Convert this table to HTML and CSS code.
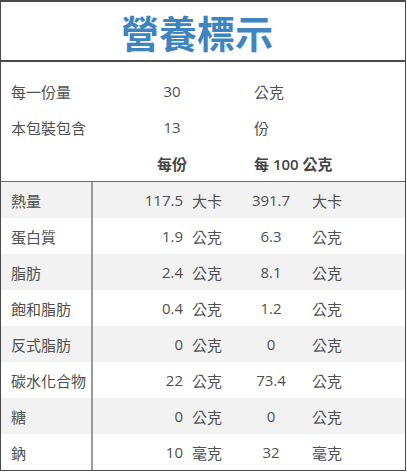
FILE: index.html
```html
<!DOCTYPE html>
<html lang="zh-Hant">
<head>
<meta charset="utf-8">
<title>營養標示</title>
<link rel="stylesheet" href="styles.css">
</head>
<body>
<div class="label">
  <div class="title">營養標示</div>
  <div class="info">
    <div class="info-row"><span class="i-name">每一份量</span><span class="i-val">30</span><span class="i-unit">公克</span></div>
    <div class="info-row"><span class="i-name">本包裝包含</span><span class="i-val">13</span><span class="i-unit">份</span></div>
    <div class="info-row head"><span class="i-name"></span><span class="i-val">每份</span><span class="i-unit">每 100 公克</span></div>
  </div>
  <div class="table">
    <div class="row shade"><span class="name">熱量</span><span class="v1">117.5</span><span class="u1">大卡</span><span class="v2">391.7</span><span class="u2">大卡</span></div>
    <div class="row"><span class="name">蛋白質</span><span class="v1">1.9</span><span class="u1">公克</span><span class="v2">6.3</span><span class="u2">公克</span></div>
    <div class="row shade"><span class="name">脂肪</span><span class="v1">2.4</span><span class="u1">公克</span><span class="v2">8.1</span><span class="u2">公克</span></div>
    <div class="row"><span class="name">飽和脂肪</span><span class="v1">0.4</span><span class="u1">公克</span><span class="v2">1.2</span><span class="u2">公克</span></div>
    <div class="row shade"><span class="name">反式脂肪</span><span class="v1">0</span><span class="u1">公克</span><span class="v2">0</span><span class="u2">公克</span></div>
    <div class="row"><span class="name">碳水化合物</span><span class="v1">22</span><span class="u1">公克</span><span class="v2">73.4</span><span class="u2">公克</span></div>
    <div class="row shade"><span class="name">糖</span><span class="v1">0</span><span class="u1">公克</span><span class="v2">0</span><span class="u2">公克</span></div>
    <div class="row"><span class="name">鈉</span><span class="v1">10</span><span class="u1">毫克</span><span class="v2">32</span><span class="u2">毫克</span></div>
  </div>
</div>
</body>
</html>
```
FILE: styles.css
```css
html, body {
  margin: 0;
  padding: 0;
  background: #ffffff;
}

.label {
  box-sizing: border-box;
  width: 406px;
  height: 471px;
  border: 1px solid #4a4a4a;
  border-top-width: 2px;
  font-family: "Open Sans", "Noto Sans CJK TC", sans-serif;
  font-size: 15px;
  color: #505050;
  display: flex;
  flex-direction: column;
}

.title {
  height: 58px;
  border-bottom: 2px solid #4a4a4a;
  display: flex;
  align-items: center;
  justify-content: center;
  padding-right: 12px;
  font-family: "Noto Sans CJK TC", sans-serif;
  font-weight: 700;
  font-size: 38px;
  color: #3d84c0;
}

.info {
  padding-top: 11px;
  border-bottom: 1px solid #6a6a6a;
}

.info-row {
  display: grid;
  grid-template-columns: 139px 64px 1fr;
  height: 36px;
  align-items: center;
}

.i-name {
  padding-left: 10px;
}

.i-val {
  text-align: center;
}

.i-unit {
  padding-left: 50px;
}

.info-row.head {
  font-weight: 600;
  color: #454545;
}

.table {
  display: flex;
  flex-direction: column;
}

.row {
  display: grid;
  grid-template-columns: 90px 94px 50px 70px 1fr;
  height: 36px;
  align-items: stretch;
}

.row > span {
  display: flex;
  align-items: center;
}

.row.shade {
  background: #f2f2f2;
}

.name {
  padding-left: 10px;
}

.v1 {
  border-left: 2px solid #9a9a9a;
  justify-content: flex-end;
  padding-right: 2px;
}

.u1 {
  padding-left: 7px;
}

.v2 {
  justify-content: center;
  padding-left: 2px;
}

.u2 {
  padding-left: 7px;
}
```
